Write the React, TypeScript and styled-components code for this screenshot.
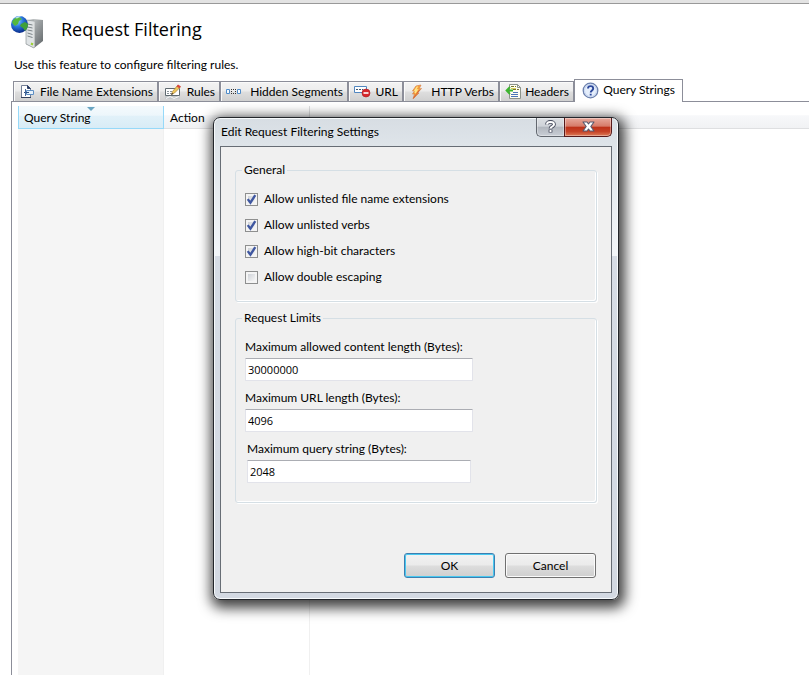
import React, { ReactNode, useState } from "react";
import styled, { createGlobalStyle } from "styled-components";

const UI_FONT = `Lato, "Open Sans", sans-serif`;
const WIDE_FONT = `"Open Sans", "Noto Sans", sans-serif`;

const GlobalStyle = createGlobalStyle`
  *, *::before, *::after { box-sizing: border-box; }
  body {
    margin: 0;
    background: #fff;
    color: #000;
    font: 12px/16px ${UI_FONT};
  }
  button, input { font: inherit; color: inherit; }
`;

/* ---------- page ---------- */

const Page = styled.main`
  position: relative;
  display: flex;
  flex-direction: column;
  min-height: 100vh;
  overflow: hidden;
  border-top: 3px solid #e3e3e3;
`;

const PageHeader = styled.header`
  display: flex;
  align-items: flex-start;
  gap: 16px;
  padding: 11px 11px 5px;
  border-top: 1px solid #999;
`;

const PageTitle = styled.h1`
  margin: 0;
  font-family: ${WIDE_FONT};
  font-size: 18px;
  line-height: 28px;
  font-weight: 400;
`;

const Description = styled.p`
  margin: 3px 14px 6px;
`;

/* ---------- tabs ---------- */

const TabStrip = styled.div`
  display: flex;
  align-items: flex-end;
  height: 22px;
  padding-left: 13px;
  white-space: nowrap;
`;

const Tab = styled.button<{ $width: number; $active?: boolean }>`
  position: relative;
  z-index: ${(p) => (p.$active ? 1 : 0)};
  display: flex;
  flex: none;
  align-items: center;
  justify-content: space-between;
  width: ${(p) => p.$width}px;
  height: ${(p) => (p.$active ? 23 : 20)}px;
  margin: 0 0 ${(p) => (p.$active ? -1 : 0)}px;
  padding: ${(p) => (p.$active ? "0 7px 2px" : "0 4px 0 5px")};
  border: 1px solid #8c8e99;
  border-bottom: 0;
  background: ${(p) =>
    p.$active
      ? "#fff"
      : "linear-gradient(#f3f3f3, #ececec 48%, #dedede 52%, #d0d0d0)"};
  box-shadow: ${(p) => (p.$active ? "none" : "inset 1px 1px #fafafa")};
`;

const TabPanel = styled.section`
  display: flex;
  flex: 1;
  margin-left: 11px;
  padding: 4px 0 0 6px;
  border: solid #8c8e99;
  border-width: 1px 0 0 1px;
`;

/* ---------- list ---------- */

const List = styled.table`
  flex: 1;
  width: 100%;
  border-collapse: separate;
  border-spacing: 0;
  table-layout: fixed;
`;

const HeadCell = styled.th<{ $width?: number; $sorted?: boolean }>`
  position: relative;
  width: ${(p) => (p.$width ? `${p.$width}px` : "auto")};
  height: 23px;
  padding: 2px 6px 0 ${(p) => (p.$sorted ? 5 : 6)}px;
  text-align: left;
  font-weight: 400;
  border: solid ${(p) => (p.$sorted ? "#96d9f9" : "#dedfe1")};
  border-width: 0 ${(p) => (p.$width ? 1 : 0)}px 1px ${(p) => (p.$sorted ? 1 : 0)}px;
  background: ${(p) =>
    p.$sorted
      ? "linear-gradient(#f4fafd, #edf6fb 42%, #e1f1f9 46%, #d8ecf6)"
      : "linear-gradient(#fff 40%, #f7f8fa 44%, #f1f2f4)"};
`;

const SortMark = styled.svg`
  position: absolute;
  top: 1px;
  left: calc(50% - 4px);
`;

const BodyCell = styled.td<{ $sorted?: boolean; $line?: boolean }>`
  padding: 0;
  background: ${(p) => (p.$sorted ? "#f5f5f5" : "#fff")};
  border-right: ${(p) => (p.$line ? "1px solid #f0f0f0" : "0")};
`;

/* ---------- dialog ---------- */

const DialogFrame = styled.div`
  position: absolute;
  z-index: 2;
  top: 114px;
  left: 213px;
  width: 406px;
  padding: 0 6px 6px;
  border: 1px solid #23262b;
  border-radius: 7px;
  background: linear-gradient(#d7dde3, #dfe5ea 30px, #f3f6f9 138px, #d6dce5 138px, #d3d9e2);
  box-shadow: inset 0 0 0 1px #f7fafc, 2px 4px 13px 4px rgba(0, 0, 0, 0.75);
`;

const TitleBar = styled.div`
  display: flex;
  align-items: flex-start;
  justify-content: space-between;
  height: 28px;
`;

const DialogTitle = styled.h2`
  margin: 0;
  padding: 6px 14px 0 1px;
  font-size: 12px;
  line-height: 16px;
  font-weight: 400;
`;

const CaptionButtons = styled.div`
  display: flex;
`;

const CaptionButton = styled.button<{ $close?: boolean }>`
  display: flex;
  align-items: center;
  justify-content: center;
  width: ${(p) => (p.$close ? 48 : 28)}px;
  height: 19px;
  padding: 0 0 1px;
  border: 1px solid ${(p) => (p.$close ? "#56191a" : "#62676f")};
  border-top: 0;
  border-right-width: ${(p) => (p.$close ? 1 : 0)}px;
  border-radius: ${(p) => (p.$close ? "0 0 5px 0" : "0 0 0 5px")};
  background: ${(p) =>
    p.$close
      ? "linear-gradient(#e7a99c, #d67a68 46%, #bd3018 50%, #c64226 75%, #dd7c58)"
      : "linear-gradient(#dcdfe3, #cfd3d9 46%, #b1b6be 50%, #c9ced5)"};
  box-shadow: inset 0 0 0 1px rgba(255, 255, 255, 0.35);
`;

const DialogBody = styled.form`
  padding: 15px 14px 14px;
  border: 1px solid #676d75;
  background: #f0f0f0;
`;

const Group = styled.fieldset`
  min-width: 0;
  margin: 0 0 8px;
  padding: 8px 8px 11px 9px;
  border: 1px solid #d5dfe5;
  border-radius: 3px;
  box-shadow: inset -1px -1px #fff, 1px 1px #fff;
`;

const LimitGroup = styled(Group)`
  margin-bottom: 50px;
  padding: 13px 8px 19px 9px;
`;

const Legend = styled.legend`
  margin-left: -3px;
  padding: 0 2px;
  background: #f0f0f0;
`;

const CheckRow = styled.label`
  display: flex;
  align-items: center;
  gap: 6px;
  height: 26px;
`;

const CheckBox = styled.input`
  appearance: none;
  width: 13px;
  height: 13px;
  margin: 0;
  border: 1px solid #8e8f8f;
  background: linear-gradient(135deg, #cfd3d8, #f6f6f6) content-box, #f4f4f4;
  padding: 2px;

  &:checked {
    background:
      url("data:image/svg+xml,%3Csvg xmlns='http://www.w3.org/2000/svg' viewBox='0 0 11 11'%3E%3Cpath d='M2.3 5.2l2.3 3L8.7 1.8' fill='none' stroke='%233f57a0' stroke-width='2'/%3E%3C/svg%3E") border-box,
      linear-gradient(135deg, #cfd3d8, #f6f6f6) content-box, #f4f4f4;
  }
`;

const Field = styled.div<{ $inset?: boolean }>`
  display: flex;
  flex-direction: column;
  gap: 3px;
  padding: 0 ${(p) => (p.$inset ? 117 : 115)}px 0 ${(p) => (p.$inset ? 2 : 0)}px;
  white-space: nowrap;

  & + & {
    margin-top: 9px;
  }
`;

const TextBox = styled.input`
  width: 100%;
  height: 23px;
  padding: 0 2px 1px;
  border: 1px solid #e2e3ea;
  border-top-color: #abadb3;
  border-radius: 1px;
  background: #fff;
  font-family: ${WIDE_FONT};
  font-size: 11px;
`;

const Actions = styled.div`
  display: flex;
  justify-content: flex-end;
  gap: 10px;
  padding-right: 1px;
`;

const PushButton = styled.button<{ $primary?: boolean }>`
  width: 91px;
  height: 25px;
  padding: 0;
  border: 1px solid ${(p) => (p.$primary ? "#3c7fb1" : "#707070")};
  border-radius: 3px;
  background: linear-gradient(#f2f2f2, #ebebeb 48%, #dddddd 52%, #cfcfcf);
  box-shadow: inset 0 0 0 ${(p) => (p.$primary ? "1px #48c8f0" : "1px #fbfbfb")};
`;

/* ---------- drawings ---------- */

const ServerGlobe = () => (
  <svg width="34" height="34" viewBox="0 0 34 34" aria-hidden="true">
    <defs>
      <radialGradient id="globe" cx=".38" cy=".3" r=".7">
        <stop offset="0" stopColor="#8fd0ff" />
        <stop offset=".45" stopColor="#2c7ade" />
        <stop offset="1" stopColor="#0a2d8c" />
      </radialGradient>
      <linearGradient id="side" x1="0" y1="0" x2="1" y2="1">
        <stop offset="0" stopColor="#d4d8d9" />
        <stop offset=".5" stopColor="#969b9d" />
        <stop offset="1" stopColor="#5e6366" />
      </linearGradient>
    </defs>
    <path d="M16 5l6-1 10 1v21l-9 7-8-4z" fill="url(#side)" />
    <path d="M15 5l8 1v27l-8-4z" fill="#dfe3e5" stroke="#83898c" strokeWidth=".6" />
    <path d="M16.500 9l5 1M16.500 12l5 1M16.500 15l5 1M16.500 18l5 1.500M16.500 21l5 1.500" stroke="#7b8387" />
    <path d="M23 6.500v26" stroke="#f6f8f8" />
    <path d="M20 28.500l2 1" stroke="#9ad02e" strokeWidth="2" />
    <circle cx="8.500" cy="9.500" r="8.500" fill="url(#globe)" />
    <path d="M1 7c1-3 4-5 7-5l3 2-3 2-1 3-3 2-2-2z" fill="#55b83c" />
    <path d="M10 9l4-2 3 2c0 3-1 5-3 7l-2-3-3-2z" fill="#3fa037" />
    <path d="M4 3c2-1.500 4-2 6-1.500l-4 2z" fill="#d9f4ff" opacity=".8" />
  </svg>
);

const FileIcon = () => (
  <svg width="16" height="16" viewBox="0 0 16 16" aria-hidden="true">
    <path d="M2.500 1.500h6l3 3v9h-9z" fill="#fff" stroke="#737f96" />
    <path d="M8.500 1.500v3h3z" fill="#23345c" stroke="#33446b" />
    <path d="M2 13.500h10" stroke="#32405c" />
    <path d="M7.500 6.500h7v4h-7z" fill="#e6f1fb" stroke="#5d8fc4" />
    <path d="M5 8.500h5" stroke="#284e84" />
    <path d="M6.500 5v7" stroke="#46689a" />
  </svg>
);

const RulesIcon = () => (
  <svg width="18" height="16" viewBox="0 0 18 16" aria-hidden="true">
    <path d="M1.500 4.500h14v7h-14z" fill="#fff" stroke="#5f6a70" />
    <path d="M1 12h15v3H1z" fill="#c5c9cb" />
    <path d="M3 7.500h6M3 9.500h5" stroke="#8a9499" strokeDasharray="2 1" />
    <path d="M2 14.500l4-2 4 2 5-2" stroke="#f7f7f7" fill="none" />
    <path d="M7.500 10.500l1-3 5-6 2.500 2-5.500 5.500z" fill="#efc75c" stroke="#a8843d" strokeWidth=".7" />
    <path d="M12.500 2.500l1.500-2 3 2-1.500 1.800z" fill="#d8473b" />
    <path d="M7 11l1.300-2 1 1z" fill="#35302b" />
  </svg>
);

const SegmentsIcon = () => (
  <svg width="16" height="16" viewBox="0 0 16 16" aria-hidden="true">
    <path d="M.5 5.500h3v4h-3zM11.500 5.500h3v4h-3z" fill="#f7fbff" stroke="#4f8cc9" />
    <path d="M5 5.500h5M5 9.500h5" stroke="#333" strokeDasharray="1 1" />
    <path d="M5.500 7v1M9.500 7v1" stroke="#333" />
  </svg>
);

const UrlIcon = () => (
  <svg width="17" height="16" viewBox="0 0 17 16" aria-hidden="true">
    <path d="M.5 2.500h12v6H.5z" fill="#fff" stroke="#5187c0" />
    <path d="M2 5.500h7" stroke="#3c5673" strokeDasharray="2 1" />
    <circle cx="12" cy="9" r="4" fill="#d7282c" stroke="#a9181d" strokeWidth=".6" />
    <path d="M9.500 9h5" stroke="#fff" strokeWidth="1.600" />
  </svg>
);

const BoltIcon = () => (
  <svg width="16" height="16" viewBox="0 0 16 16" aria-hidden="true">
    <path d="M7 2l5-1-2 4 2.500-.5-4 4.500 1.500 0-6 6 1.500-5-2 0 2-3H3.500z" fill="#f7a13a" stroke="#d98149" strokeWidth=".7" />
    <path d="M8.500 2.500L6 6.500l2-.5-2 3" stroke="#ffe78a" strokeWidth="1.400" fill="none" />
    <path d="M10.500 6l-6 8" stroke="#c54b38" strokeWidth=".7" />
  </svg>
);

const HeadersIcon = () => (
  <svg width="17" height="17" viewBox="0 0 17 17" aria-hidden="true">
    <path d="M4.500 1.500h8l3 3v11h-11z" fill="#fffef2" stroke="#8c938b" />
    <path d="M12.500 1.500v3h3" fill="none" stroke="#8c938b" />
    <path d="M6 3.500h5M8 6.500h6" stroke="#77762c" strokeDasharray="3 1" />
    <path d="M6 5.500h5" stroke="#d9cf55" />
    <path d="M8 9.500h5M6 11.500h7M6 13.500h7" stroke="#4b76b8" />
    <path d="M5 4L1.500 7.500 5 11M2 7.500h6" fill="none" stroke="#3cb52e" strokeWidth="1.800" />
  </svg>
);

const HelpIcon = () => (
  <svg width="17" height="17" viewBox="0 0 17 17" aria-hidden="true">
    <circle cx="8.500" cy="8.500" r="7.300" fill="#e5eefb" stroke="#6c80ad" strokeWidth="1.300" />
    <circle cx="8.500" cy="8.500" r="6" fill="none" stroke="#c7d7f2" />
    <path d="M6 6.500c0-3.200 5.200-3.200 5.200 0 0 2-2.500 1.800-2.500 4M8.700 11.800v1.700" fill="none" stroke="#2c489c" strokeWidth="1.900" />
  </svg>
);

const CaptionHelp = () => (
  <svg width="11" height="13" viewBox="0 0 11 13" aria-hidden="true">
    <path d="M2 4.500c0-3.500 7-3.500 7 0 0 2-3.500 2-3.500 4M5.500 9.500v3" fill="none" stroke="#4a4f60" strokeWidth="3.800" />
    <path d="M2 4.500c0-3.300 7-3.300 7 0 0 2-3.500 2-3.500 4M5.500 10v2" fill="none" stroke="#fff" strokeWidth="2" />
  </svg>
);

const CaptionClose = () => (
  <svg width="13" height="11" viewBox="0 0 13 11" aria-hidden="true">
    <path
      d="M1 1h4l1.500 2L8 1h4L8.800 5.500 12 10H8L6.500 8 5 10H1l3.200-4.500z"
      fill="#fff"
      stroke="#56596e"
      strokeWidth="1.100"
      strokeLinejoin="round"
    />
  </svg>
);

/* ---------- data ---------- */

const tabs: { label: string; width: number; icon: ReactNode }[] = [
  { label: "File Name Extensions", width: 145, icon: <FileIcon /> },
  { label: "Rules", width: 62, icon: <RulesIcon /> },
  { label: "Hidden Segments", width: 128, icon: <SegmentsIcon /> },
  { label: "URL", width: 55, icon: <UrlIcon /> },
  { label: "HTTP Verbs", width: 96, icon: <BoltIcon /> },
  { label: "Headers", width: 75, icon: <HeadersIcon /> },
  { label: "Query Strings", width: 109, icon: <HelpIcon /> },
];

const options = [
  { label: "Allow unlisted file name extensions", on: true },
  { label: "Allow unlisted verbs", on: true },
  { label: "Allow high-bit characters", on: true },
  { label: "Allow double escaping", on: false },
];

const limits = [
  { id: "content", label: "Maximum allowed content length (Bytes):", value: "30000000" },
  { id: "url", label: "Maximum URL length (Bytes):", value: "4096" },
  { id: "query", label: "Maximum query string (Bytes):", value: "2048", inset: true },
];

const SettingsDialog = () => (
  <DialogFrame role="dialog" aria-labelledby="dialog-title">
    <TitleBar>
      <DialogTitle id="dialog-title">Edit Request Filtering Settings</DialogTitle>
      <CaptionButtons>
        <CaptionButton aria-label="Help"><CaptionHelp /></CaptionButton>
        <CaptionButton $close aria-label="Close"><CaptionClose /></CaptionButton>
      </CaptionButtons>
    </TitleBar>
    <DialogBody onSubmit={(e) => e.preventDefault()}>
      <Group>
        <Legend>General</Legend>
        {options.map((o) => (
          <CheckRow key={o.label}>
            <CheckBox type="checkbox" defaultChecked={o.on} />
            {o.label}
          </CheckRow>
        ))}
      </Group>
      <LimitGroup>
        <Legend>Request Limits</Legend>
        {limits.map((l) => (
          <Field key={l.id} $inset={l.inset}>
            <label htmlFor={l.id}>{l.label}</label>
            <TextBox id={l.id} type="text" defaultValue={l.value} />
          </Field>
        ))}
      </LimitGroup>
      <Actions>
        <PushButton type="submit" $primary>OK</PushButton>
        <PushButton type="button">Cancel</PushButton>
      </Actions>
    </DialogBody>
  </DialogFrame>
);

export default function App() {
  const [active, setActive] = useState("Query Strings");
  return (
    <>
      <GlobalStyle />
      <Page>
        <PageHeader>
          <ServerGlobe />
          <PageTitle>Request Filtering</PageTitle>
        </PageHeader>
        <Description>Use this feature to configure filtering rules.</Description>
        <TabStrip role="tablist">
          {tabs.map((t) => (
            <Tab
              key={t.label}
              role="tab"
              aria-selected={t.label === active}
              $active={t.label === active}
              $width={t.width}
              onClick={() => setActive(t.label)}
            >
              {t.icon}
              {t.label}
            </Tab>
          ))}
        </TabStrip>
        <TabPanel>
          <List>
            <thead>
              <tr>
                <HeadCell $width={146} $sorted>
                  Query String
                  <SortMark width="8" height="4" viewBox="0 0 8 4" aria-hidden="true">
                    <path d="M0 0h8L4 4z" fill="#6aa5c2" />
                  </SortMark>
                </HeadCell>
                <HeadCell $width={146}>Action</HeadCell>
                <HeadCell />
              </tr>
            </thead>
            <tbody>
              <tr>
                <BodyCell $sorted $line />
                <BodyCell $line />
                <BodyCell />
              </tr>
            </tbody>
          </List>
        </TabPanel>
        <SettingsDialog />
      </Page>
    </>
  );
}
